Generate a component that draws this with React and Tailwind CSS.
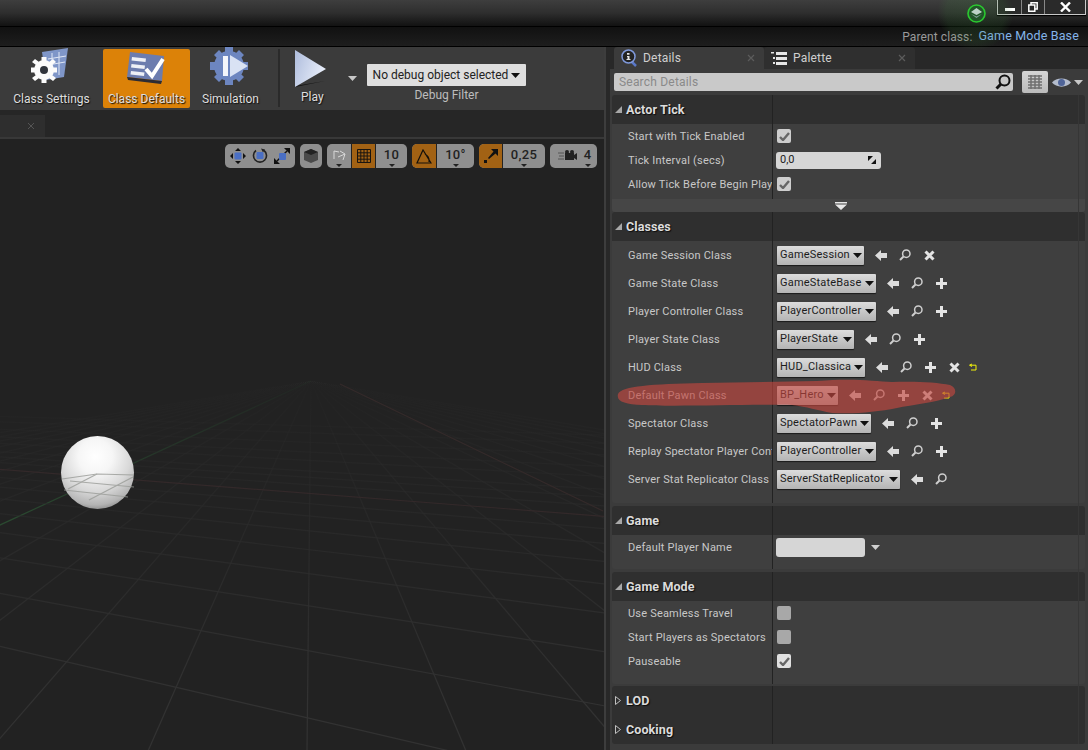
import React from "react";

const VP = { x: 311, y: 380 };

// ground grid lines of the viewport, all through two vanishing points
const gridLines = () => {
  const lines = [];
  for (let i = -14; i <= 14; i++) {
    const bx = 307 + i * 159;
    lines.push({ x1: VP.x, y1: VP.y, x2: bx, y2: 750, tone: i === -5 ? "url(#fadeGreen)" : "url(#fade)" });
  }
  [30, 26, 22, 19, 17, 15, 14, 13, 12, 11, 10, 9, 8, 7, 6, 5, 4].forEach((n) => {
    const dy = 1350 / n;
    const slope = dy / 1450;
    const y = VP.y + dy;
    lines.push({
      x1: 0,
      y1: y - slope * 310,
      x2: 610,
      y2: y + slope * 300,
      tone: n === 12 ? "#33292a" : "url(#fade)",
    });
  });
  return lines;
};

const Viewport = () => (
  <svg className="absolute inset-0" width="604" height="612" viewBox="0 138 604 612">
    <defs>
      <radialGradient id="ball" cx="0.47" cy="0.28" r="0.78">
        <stop offset="0" stopColor="#ffffff" />
        <stop offset="0.3" stopColor="#f6f6f6" />
        <stop offset="0.62" stopColor="#d8d8d8" />
        <stop offset="0.85" stopColor="#b4b4b4" />
        <stop offset="1" stopColor="#777777" />
      </radialGradient>
      <linearGradient id="fade" x1="0" y1="385" x2="0" y2="700" gradientUnits="userSpaceOnUse">
        <stop offset="0" stopColor="#2a2a2a" stopOpacity="0.1" />
        <stop offset="0.45" stopColor="#2a2a2a" stopOpacity="0.8" />
        <stop offset="1" stopColor="#323232" />
      </linearGradient>
      <linearGradient id="fadeGreen" x1="0" y1="390" x2="0" y2="520" gradientUnits="userSpaceOnUse">
        <stop offset="0" stopColor="#24402b" stopOpacity="0.2" />
        <stop offset="1" stopColor="#2a4a30" />
      </linearGradient>
    </defs>
    {gridLines().map(({ tone, ...l }, i) => (
      <line key={i} {...l} stroke={tone} strokeWidth="1.200" />
    ))}
    <path d="M340 383L603 510" stroke="#342a2a" strokeWidth="1.200" />
    <circle cx="97.5" cy="471.5" r="36.5" fill="url(#ball)" />
    <g stroke="#9a9c98" strokeWidth="1.2" fill="none" opacity="0.8">
      <path d="M62 478L97 473L134 474" />
      <path d="M64 489L128 496" />
      <path d="M70 480L134 486" />
      <path d="M68 488L97 473" />
      <path d="M89 499L133 476" />
    </g>
  </svg>
);

const ClassSettingsIcon = () => (
  <svg width="48" height="40" viewBox="0 0 48 40">
    <path d="M14 5L40 1L36 30L18 33Z" fill="#7f96c8" />
    <path d="M24 6V28M31 5V28M20 12L38 9M20 18L37 15" stroke="#dfe6f5" strokeWidth="1" fill="none" />
    <g transform="translate(16 23)">
      <circle r="10" fill="#fbfbfb" />
      <path d="M-2.5-13h5v5h-5zM-2.5 8h5v5h-5zM-13-2.5h5v5h-5zM8-2.5h5v5h-5z" fill="#fbfbfb" />
      <path d="M-9-11l4 3-3 3-4-3zM9-11l3 3-4 3-3-3zM-9 11l-3-3 4-3 3 3zM9 11l-4-3 3-3 4 3z" fill="#fbfbfb" />
      <circle r="4" fill="#30343c" />
    </g>
  </svg>
);

const ClassDefaultsIcon = () => (
  <svg width="42" height="36" viewBox="0 0 42 36">
    <path d="M4 1L38 5L36 30L1 26Z" fill="#6c7cae" />
    <path d="M1 26L36 30L35 33L2 29Z" fill="#2c2c34" />
    <path d="M6 6L20 7.5L19.5 11L5.5 9.5ZM5.5 13L19 14.5L18.5 18L5 16.5ZM5 20L18.5 21.5L18 25L4.5 23.5Z" fill="#eef0f6" />
    <path d="M20 18L26 25L37 8" stroke="#ffffff" strokeWidth="4" fill="none" />
  </svg>
);

const SimulationIcon = () => (
  <svg width="42" height="40" viewBox="0 0 42 40">
    <g transform="translate(19 19)" fill="#6d86c0">
      <circle r="15" />
      <path d="M-4-19h8v7h-8zM-4 12h8v7h-8zM-19-4h7v8h-7zM12-4h7v8h-7z" />
      <path d="M-15-11l5-5 5 5-5 5zM15-11l-5-5-5 5 5 5zM-15 11l5 5 5-5-5-5zM15 11l-5 5-5-5 5-5z" />
    </g>
    <path d="M13 9h5v20h-5z" fill="#f4f6fb" />
    <path d="M20 8L38 19L20 30Z" fill="#d9e2f4" />
  </svg>
);

const ToolButton = ({ label, active, icon }) => (
  <div className={`flex h-[59px] w-[87px] flex-col items-center rounded-[2px] ${active ? "bg-[#dc8208]" : ""}`}>
    <div className="flex h-[38px] items-end justify-center">{icon}</div>
    <span className="mt-[5px] text-[12px] leading-[14px] text-[#dedede] [text-shadow:1px_1px_1px_#111]">{label}</span>
  </div>
);

const Toolbar = () => (
  <div className="flex h-[63px] items-start bg-[#3b3b3b] pt-[2px]">
    <div className="ml-[8px]"><ToolButton label="Class Settings" icon={<ClassSettingsIcon />} /></div>
    <div className="ml-[8px]"><ToolButton label="Class Defaults" active icon={<ClassDefaultsIcon />} /></div>
    <div className="ml-[-3px]"><ToolButton label="Simulation" icon={<SimulationIcon />} /></div>
    <div className="ml-[4px] h-[58px] w-[2px] bg-[#2a2a2a]" />
    <div className="ml-[13px] flex w-[50px] flex-col items-start">
      <svg width="35" height="40" viewBox="0 0 35 40">
        <defs>
          <linearGradient id="play" x1="0" y1="0" x2="1" y2="0.4">
            <stop offset="0" stopColor="#aebcdc" />
            <stop offset="1" stopColor="#e8eefa" />
          </linearGradient>
        </defs>
        <path d="M2 37L32 32L2 38Z" fill="#111" />
        <path d="M2 1L33 20L2 38Z" fill="url(#play)" />
      </svg>
      <span className="ml-[8px] mt-[1px] text-[12px] leading-[14px] text-[#dedede] [text-shadow:1px_1px_1px_#111]">Play</span>
    </div>
    <svg className="mt-[27px] ml-[5px]" width="9" height="5" viewBox="0 0 9 5"><path d="M0 0H9L4.500 5Z" fill="#c8c8c8" /></svg>
    <div className="mt-[15px] ml-[10px] flex w-[159px] flex-col items-center">
      <div className="flex h-[22px] w-full items-center justify-center gap-[3px] rounded-[1px] bg-[#dedede] text-[12px] text-[#222]">
        No debug object selected
        <svg width="9" height="5" viewBox="0 0 9 5"><path d="M0 0H9L4.500 5Z" fill="#111" /></svg>
      </div>
      <span className="mt-[2px] text-[12px] leading-[14px] text-[#bdbdbd]">Debug Filter</span>
    </div>
  </div>
);

const Caret = () => (
  <svg className="absolute bottom-[1px] left-1/2 -ml-[3px]" width="6" height="3" viewBox="0 0 6 3"><path d="M0 0H6L3 3Z" fill="#222" /></svg>
);

const SnapText = ({ children, w }) => (
  <div className={`relative flex h-full items-center justify-center text-[13px] font-medium tracking-[0.3px] text-[#222] ${w}`}>
    <span className="-mt-[3px]">{children}</span>
    <Caret />
  </div>
);

const ViewportTools = () => (
  <div className="absolute top-[5px] left-[225px] flex h-[24px] items-stretch">
    <div className="flex w-[70px] items-center justify-around rounded-[5px] bg-[#8f8f8f] px-[2px]">
      <svg width="16" height="16" viewBox="0 0 16 16">
        <path d="M8 0L11 3H5ZM8 16L5 13H11ZM0 8L3 5V11ZM16 8L13 11V5Z" fill="#111" />
        <rect x="4.500" y="4.500" width="7" height="7" rx="1" fill="#4a6fc4" />
      </svg>
      <svg width="16" height="16" viewBox="0 0 16 16">
        <path d="M4 2.500A6.500 6.500 0 1 0 12 2.500" fill="none" stroke="#222" strokeWidth="1.600" />
        <path d="M9 0.500L13 1.500L11 4.500Z" fill="#222" />
        <rect x="4.500" y="4" width="7" height="7" rx="1" fill="#4a6fc4" />
      </svg>
      <svg width="16" height="16" viewBox="0 0 16 16">
        <path d="M0 16V10L6 16ZM16 0V6L10 0Z" fill="#111" />
        <path d="M3 13L13 3" stroke="#111" strokeWidth="1.500" />
        <rect x="5" y="5" width="7" height="7" rx="1" fill="#4a6fc4" />
      </svg>
    </div>
    <div className="ml-[5px] flex w-[22px] items-center justify-center rounded-[5px] bg-[#8f8f8f]">
      <svg width="16" height="16" viewBox="0 0 16 16">
        <path d="M8 1L15 4V12L8 15L1 12V4Z" fill="#4a4a4a" />
        <path d="M8 1L15 4L8 7L1 4Z" fill="#222" />
      </svg>
    </div>
    <div className="ml-[5px] flex w-[80px] overflow-hidden rounded-[5px] bg-[#8f8f8f]">
      <div className="relative flex w-[24px] items-center justify-center">
        <svg width="15" height="14" viewBox="0 0 15 14">
          <path d="M2 10V2M7 3L2 2M6 8L13 5M8 2L13 5L11 11" stroke="#d8d8d8" strokeWidth="1" fill="none" />
        </svg>
        <Caret />
      </div>
      <div className="flex w-[25px] items-center justify-center border-x border-[#222] bg-[#a26214]">
        <svg width="14" height="14" viewBox="0 0 14 14">
          <path d="M0.500 0.500H13.500V13.500H0.500ZM3.800 0.500V13.500M7 0.500V13.500M10.200 0.500V13.500M0.500 3.800H13.500M0.500 7H13.500M0.500 10.200H13.500" stroke="#191510" strokeWidth="1" fill="none" />
        </svg>
      </div>
      <SnapText w="w-[31px]">10</SnapText>
    </div>
    <div className="ml-[5px] flex w-[62px] overflow-hidden rounded-[5px] bg-[#8f8f8f]">
      <div className="flex w-[25px] items-center justify-center border-r border-[#222] bg-[#a26214]">
        <svg width="16" height="15" viewBox="0 0 16 15">
          <path d="M7 1L1 14H15ZM9 5A8 8 0 0 1 13 13" stroke="#14100a" strokeWidth="1.200" fill="none" />
        </svg>
      </div>
      <SnapText w="flex-1">10°</SnapText>
    </div>
    <div className="ml-[5px] flex w-[66px] overflow-hidden rounded-[5px] bg-[#8f8f8f]">
      <div className="flex w-[24px] items-center justify-center border-r border-[#222] bg-[#a26214]">
        <svg width="14" height="14" viewBox="0 0 14 14">
          <path d="M0 11H3V14H0ZM7 0H14V7L11.500 4.500L5 10L4 9L9.500 2.500Z" fill="#111" />
        </svg>
      </div>
      <SnapText w="flex-1">0,25</SnapText>
    </div>
    <div className="ml-[5px] flex w-[47px] items-center overflow-hidden rounded-[5px] bg-[#8f8f8f]">
      <svg className="ml-[8px]" width="20" height="14" viewBox="0 0 20 14">
        <path d="M7 4H16V11H7ZM16 6L19 4V11L16 9Z" fill="#222" />
        <circle cx="9" cy="3" r="2" fill="#222" />
        <circle cx="14" cy="3" r="2" fill="#222" />
        <path d="M0 4H6M1 7H6M0 10H6" stroke="#555" strokeWidth="1" />
      </svg>
      <SnapText w="flex-1">4</SnapText>
    </div>
  </div>
);

const LeftPane = () => (
  <div className="flex w-[606px] flex-col border-r-2 border-[#3d3d3d]">
    <Toolbar />
    <div className="flex h-[27px] items-end bg-[#262626]">
      <div className="flex h-[22px] w-[45px] items-center justify-end bg-[#2e2e2e] pr-[10px] text-[11px] text-[#555]">
        <svg width="8" height="8" viewBox="0 0 8 8"><path d="M1 1L7 7M7 1L1 7" stroke="#555" strokeWidth="1" /></svg>
      </div>
    </div>
    <div className="relative flex-1 overflow-hidden border-t-2 border-[#383838] bg-[#222222]">
      <Viewport />
      <ViewportTools />
    </div>
  </div>
);

const DetailsIcon = () => (
  <svg width="17" height="18" viewBox="0 0 17 18">
    <path d="M10 12L15 17" stroke="#5a78c8" strokeWidth="2.500" />
    <circle cx="7.500" cy="7.500" r="6.500" fill="#232323" stroke="#7f99db" strokeWidth="1.500" />
    <path d="M6 4h2.500v1.800H6ZM6 7h2.500v3h1v1h-4v-1h1v-2h-.5Z" fill="#e6e6e6" />
  </svg>
);

const PaletteIcon = () => (
  <svg width="16" height="13" viewBox="0 0 16 13">
    <path d="M0 0h3v1.500H0ZM5 0h11v3H5ZM2 5h2v2H2ZM5 5h11v3H5ZM2 10h2v2H2ZM5 10h11v3H5Z" fill="#e6e6e6" />
  </svg>
);

const CloseX = () => (
  <svg width="8" height="8" viewBox="0 0 8 8"><path d="M1 1L7 7M7 1L1 7" stroke="#5c5c5c" strokeWidth="1.200" /></svg>
);

const PanelTab = ({ icon, label, active, w }) => (
  <div className={`flex h-[22px] items-center rounded-t-[3px] ${w} ${active ? "bg-[#3b3b3b]" : "bg-[#2f2f2f]"}`}>
    <span className="ml-[7px] flex w-[17px]">{icon}</span>
    <span className="ml-[5px] flex-1 text-[12px] tracking-[0.2px] text-[#cfcfcf]">{label}</span>
    <span className="mr-[9px] flex"><CloseX /></span>
  </div>
);

const ArrowIcon = () => (
  <svg width="12" height="11" viewBox="0 0 12 11"><path d="M6 0V3H12V8H6V11L0 5.500Z" fill="#dcdcdc" /></svg>
);
const FindIcon = () => (
  <svg width="12" height="12" viewBox="0 0 12 12">
    <circle cx="7.300" cy="4.700" r="3.700" fill="none" stroke="#cfcfcf" strokeWidth="1.500" />
    <path d="M4.500 7.500L1 11" stroke="#cfcfcf" strokeWidth="2" />
  </svg>
);
const PlusIcon = () => (
  <svg width="11" height="11" viewBox="0 0 11 11"><path d="M4 0H7V4H11V7H7V11H4V7H0V4H4Z" fill="#e4e4e4" /></svg>
);
const CrossIcon = () => (
  <svg width="11" height="11" viewBox="0 0 11 11"><path d="M1.500 1.500L9.500 9.500M9.500 1.500L1.500 9.500" stroke="#e4e4e4" strokeWidth="3" /></svg>
);
const ResetIcon = () => (
  <svg width="8" height="8" viewBox="0 0 8 8"><path d="M3 1L0.500 2.200L3 3.500M1 2.200H7V7H2" fill="none" stroke="#f2f20a" strokeWidth="1" /></svg>
);

const ICONS = { arrow: ArrowIcon, find: FindIcon, plus: PlusIcon, cross: CrossIcon };

const classRows = [
  { label: "Game Session Class", value: "GameSession", w: "w-[87px]", icons: ["arrow", "find", "cross"] },
  { label: "Game State Class", value: "GameStateBase", w: "w-[99px]", icons: ["arrow", "find", "plus"] },
  { label: "Player Controller Class", value: "PlayerController", w: "w-[99px]", icons: ["arrow", "find", "plus"] },
  { label: "Player State Class", value: "PlayerState", w: "w-[77px]", icons: ["arrow", "find", "plus"] },
  { label: "HUD Class", value: "HUD_Classica", w: "w-[88px]", icons: ["arrow", "find", "plus", "cross"], reset: true },
  { label: "Default Pawn Class", value: "BP_Hero", w: "w-[61px]", icons: ["arrow", "find", "plus", "cross"], reset: true },
  { label: "Spectator Class", value: "SpectatorPawn", w: "w-[94px]", icons: ["arrow", "find", "plus"] },
  { label: "Replay Spectator Player Controller Class", value: "PlayerController", w: "w-[99px]", icons: ["arrow", "find", "plus"] },
  { label: "Server Stat Replicator Class", value: "ServerStatReplicator", w: "w-[123px]", icons: ["arrow", "find"] },
];

const Row = ({ label, h, children }) => (
  <div className={`flex ${h}`}>
    <div className="flex w-[161px] shrink-0 items-center overflow-hidden border-r border-[#222] pt-[2px] pl-[16px] text-[11px] tracking-[0.2px] whitespace-nowrap text-[#c8c8c8]">
      {label}
    </div>
    <div className="flex flex-1 items-center pl-[3px]">{children}</div>
  </div>
);

const ClassRow = ({ row }) => (
  <Row label={row.label} h="h-[28px]">
    <div className={`ml-[1px] flex h-[19px] items-center justify-between rounded-[1px] bg-gradient-to-b from-[#dcdcdc] to-[#b4b4b4] pr-[2px] pl-[3px] text-[11px] tracking-[0.2px] whitespace-nowrap text-[#1c1c1c] shadow-[0_1px_1px_#1a1a1a] ${row.w}`}>
      <span>{row.value}</span>
      <svg width="9" height="5" viewBox="0 0 9 5"><path d="M0 0H9L4.500 5Z" fill="#111" /></svg>
    </div>
    <div className="ml-[5px] flex items-center">
      {row.icons.map((name, i) => {
        const Icon = ICONS[name];
        return (
          <span key={i} className="flex w-[24px] justify-center">
            <Icon />
          </span>
        );
      })}
      {row.reset && <span className="ml-[3px] flex"><ResetIcon /></span>}
    </div>
  </Row>
);

const Check = ({ checked, light }) => (
  <div className={`ml-[1px] flex h-[14px] w-[14px] items-center justify-center rounded-[2px] ${checked ? (light ? "bg-[#e0e0e0]" : "bg-[#cdcdcd]") : "bg-[#a8a8a8]"}`}>
    {checked && (
      <svg width="11" height="9" viewBox="0 0 11 9"><path d="M1 5L4 8L10 1" fill="none" stroke="#666" strokeWidth="2.400" /></svg>
    )}
  </div>
);

const Header = ({ title, open = true }) => (
  <div className="flex h-[29px] bg-[#2f2f2f]">
    <div className="flex w-[161px] shrink-0 items-center border-r border-[#222] pl-[3px]">
      {open ? (
        <svg width="7" height="7" viewBox="0 0 7 7"><path d="M7 0V7H0Z" fill="#a8a8a8" /></svg>
      ) : (
        <svg width="6" height="9" viewBox="0 0 6 9"><path d="M0.500 0.500L5.500 4.500L0.500 8.500Z" fill="none" stroke="#c0c0c0" strokeWidth="1" /></svg>
      )}
      <span className={`${open ? "ml-[4px]" : "ml-[5px]"} pt-[2px] text-[12.500px] font-bold tracking-[0.1px] text-[#dcdcdc] [text-shadow:1px_1px_1px_#0c0c0c]`}>{title}</span>
    </div>
  </div>
);

const Section = ({ children, mb, pb, divider }) => (
  <div className={`relative overflow-hidden rounded-[3px] bg-[#3f3f3f] ${mb} ${pb}`}>
    {children}
    {divider && <div className="absolute inset-y-0 left-[160px] w-px bg-[#222]" />}
  </div>
);

const RightPane = () => (
  <div className="relative flex flex-1 flex-col bg-[#282828] pl-[4px]">
    <div className="ml-[4px] flex">
      <PanelTab icon={<DetailsIcon />} label="Details" active w="w-[150px]" />
      <PanelTab icon={<PaletteIcon />} label="Palette" w="w-[151px]" />
    </div>
    <div className="flex h-[26px] items-center bg-[#3b3b3b] pl-[4px]">
      <div className="flex h-[18px] w-[399px] items-center justify-between rounded-[2px] bg-[#c9c9c9] pr-[2px] pl-[5px] text-[12px] tracking-[0.2px] text-[#8a8a8a]">
        Search Details
        <svg width="16" height="16" viewBox="0 0 16 16">
          <circle cx="9.500" cy="6.500" r="5" fill="none" stroke="#111" strokeWidth="2" />
          <path d="M6 10L1.500 14.500" stroke="#111" strokeWidth="3" />
        </svg>
      </div>
      <div className="ml-[9px] flex h-[22px] w-[26px] items-center justify-center rounded-[2px] bg-gradient-to-b from-[#d4d4d4] to-[#bcbcbc]">
        <svg width="14" height="14" viewBox="0 0 14 14">
          <path d="M0 1H14M0 4H14M0 7H14M0 10H14M0 13H14M3 0V14M7 0V14M11 0V14" stroke="#707070" strokeWidth="1.500" />
        </svg>
      </div>
      <svg className="ml-[4px]" width="19" height="11" viewBox="0 0 19 11">
        <path d="M0 5.500C4 0 15 0 19 5.500C15 11 4 11 0 5.500Z" fill="#b4bccc" />
        <circle cx="9.500" cy="5.500" r="3.500" fill="#4f6498" />
      </svg>
      <svg className="ml-[3px]" width="9" height="5" viewBox="0 0 9 5"><path d="M0 0H9L4.500 5Z" fill="#c8c8c8" /></svg>
    </div>
    <div className="flex-1 bg-[#3b3b3b] pr-[3px] pl-[2px]">
      <Section>
        <Header title="Actor Tick" />
        <Row label="Start with Tick Enabled" h="h-[24px]"><Check checked /></Row>
        <Row label="Tick Interval (secs)" h="h-[24px]">
          <div className="flex h-[17px] w-[105px] items-center justify-between rounded-[3px] bg-[#d6d6d6] pr-[5px] pl-[4px] text-[11px] text-[#1c1c1c]">
            0,0
            <svg width="8" height="8" viewBox="0 0 8 8"><path d="M0 0H5L0 5ZM8 8H3L8 3Z" fill="#111" /></svg>
          </div>
        </Row>
        <Row label="Allow Tick Before Begin Play" h="h-[24px]"><Check checked /></Row>
        <div className="h-[3px] w-[161px] border-r border-[#222]" />
        <div className="flex h-[13px] items-center bg-[#464646] pl-[223px]">
          <svg width="12" height="8" viewBox="0 0 12 8">
            <path d="M0 0H12V1.500H0ZM0 2.500H12L6 8Z" fill="#e8e8e8" />
          </svg>
        </div>
      </Section>
      <Section mb="mb-[3px]" pb="pb-[10px]" divider>
        <Header title="Classes" />
        {classRows.map((row) => <ClassRow key={row.label} row={row} />)}
      </Section>
      <Section mb="mb-[3px]" pb="pb-[10px]" divider>
        <Header title="Game" />
        <Row label="Default Player Name" h="h-[24px]">
          <div className="h-[19px] w-[89px] rounded-[3px] bg-[#d6d6d6]" />
          <svg className="ml-[6px]" width="9" height="5" viewBox="0 0 9 5"><path d="M0 0H9L4.500 5Z" fill="#d0d0d0" /></svg>
        </Row>
      </Section>
      <Section mb="mb-[2px]" pb="pb-[11px]" divider>
        <Header title="Game Mode" />
        <Row label="Use Seamless Travel" h="h-[24px]"><Check /></Row>
        <Row label="Start Players as Spectators" h="h-[24px]"><Check /></Row>
        <Row label="Pauseable" h="h-[24px]"><Check checked light /></Row>
      </Section>
      <Section>
        <Header title="LOD" open={false} />
        <Header title="Cooking" open={false} />
      </Section>
    </div>
    <div className="absolute top-[48px] right-[9px] bottom-[6px] w-px bg-[#363636]" />
  </div>
);

// hand drawn red marking over the Default Pawn Class row
const Scribble = () => (
  <svg className="absolute top-[376px] left-[612px]" width="350" height="42" viewBox="0 0 350 42">
    <path
      d="M6 18C10 10 40 8 90 7C130 6 170 6 205 5C240 2 262 5 280 6C300 5 325 6 338 9C345 12 345 19 338 21C325 26 300 29 285 32C265 36 245 38 220 37C205 34 195 31 180 29C140 28 60 31 30 29C14 28 4 26 6 18Z"
      fill="#c2473f"
      fillOpacity="0.65"
    />
  </svg>
);

const App = () => (
  <div className="relative flex h-[750px] w-[1088px] flex-col overflow-hidden bg-[#262626] [font-family:Roboto,sans-serif]">
    <div className="relative flex h-[27px] justify-end border-b border-black bg-gradient-to-b from-[#3e3e3e] via-[#2e2e2e] to-[#121212]">
      <svg className="absolute top-[4px] left-[967px]" width="19" height="19" viewBox="0 0 19 19">
        <circle cx="9.500" cy="9.500" r="8.500" fill="#1c4a25" stroke="#27d52d" strokeWidth="1.600" />
        <path d="M4 8L9.500 4L15 8L9.500 11Z" fill="#d8e2e6" />
        <path d="M4 10L9.500 14L15 10L9.500 12.500Z" fill="#8aa0a8" />
      </svg>
      <div className="relative mr-[2px] flex h-[15px] border border-t-0 border-[#c8c8c8] bg-[#2a2a2a] shadow-[0_1px_1px_#000]">
        <div className="flex w-[24px] items-end justify-center border-r border-[#888] pb-[3px]">
          <div className="h-[3px] w-[10px] bg-white" />
        </div>
        <div className="flex w-[23px] items-center justify-center border-r border-[#888]">
          <svg width="10" height="10" viewBox="0 0 10 10"><path d="M0.800 3H6.800V9.200H0.800ZM3 3V0.800H9.200V7H7" fill="none" stroke="#fff" strokeWidth="1.500" /></svg>
        </div>
        <div className="flex w-[40px] items-center justify-center">
          <svg width="11" height="10" viewBox="0 0 11 10"><path d="M1 0.500L10 9.500M10 0.500L1 9.500" stroke="#fff" strokeWidth="2.400" /></svg>
        </div>
      </div>
    </div>
    <div className="flex h-[20px] items-center justify-end gap-[6px] border-b border-black bg-gradient-to-b from-[#111] to-[#1e1e1e] pr-[9px] text-[12px] tracking-[0.1px]">
      <span className="text-[#9a9a9a]">Parent class:</span>
      <span className="text-[12.500px] tracking-[0.15px] text-[#84b4ea]">Game Mode Base</span>
    </div>
    <div className="flex flex-1 overflow-hidden">
      <LeftPane />
      <RightPane />
    </div>
    <div className="pointer-events-none absolute top-[-25px] left-[938px] h-[75px] w-[75px] rounded-full bg-[radial-gradient(circle,#3c8c3c2e_0%,#3c8c3c22_55%,transparent_72%)]" />
    <Scribble />
  </div>
);

export default App;
